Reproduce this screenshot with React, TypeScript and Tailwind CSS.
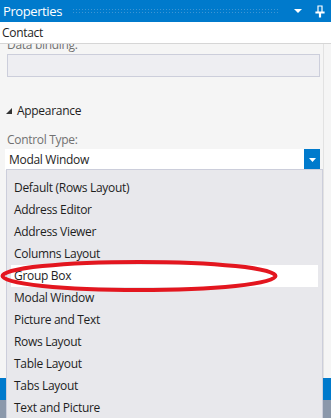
const items = [
  'Default (Rows Layout)',
  'Address Editor',
  'Address Viewer',
  'Columns Layout',
  'Group Box',
  'Modal Window',
  'Picture and Text',
  'Rows Layout',
  'Table Layout',
  'Tabs Layout',
  'Text and Picture',
]

export default function App() {
  return (
    <div
      className="relative w-[331px] h-[418px] overflow-hidden bg-[#f5f5f5] text-[12px] tracking-[-0.3px] text-[#1e1e1e]"
      style={{ fontFamily: '"Segoe UI", "Open Sans", "Noto Sans", sans-serif' }}
    >
      {/* title bar */}
      <div className="h-[22px] bg-[#007acc] flex items-center pl-[3px] pr-[6px] gap-[6px]">
        <span className="text-white text-[13px] leading-none tracking-[-0.4px]">Properties</span>
        <div className="flex-1 h-[6px] ml-[4px] bg-[radial-gradient(circle,#3d95d4_0.7px,transparent_1px)] bg-[length:3px_3px]" />
        <svg width="10" height="6" viewBox="0 0 10 6" className="ml-[8px]">
          <path d="M1 1h8L5 5z" fill="#fff" />
        </svg>
        <svg width="10" height="13" viewBox="0 0 10 13" className="ml-[6px]">
          <path d="M3 1h4v6H3zM1 7h8v1H1zM4.5 8h1v4h-1z" fill="none" stroke="#fff" strokeWidth="1.2" />
        </svg>
      </div>

      <div className="h-[22px] bg-white border-b border-[#d6d6d6] flex items-center pl-[2px] text-[12px] text-[#1e1e1e]">
        Contact
      </div>

      <div className="flex">
        <div className="flex-1">
          <div className="h-[10px] overflow-hidden">
            <div className="-mt-[8px] pl-[7px] text-[12px] text-[#717171]">Data binding:</div>
          </div>
          <div className="ml-[7px] mr-[1px] h-[23px] bg-[#eeeef2] border border-[#cccedb]" />
          <div className="h-[24px]" />
          <div className="h-[20px] flex items-center pl-[6px] gap-[5px] text-[12px]">
            <svg width="6" height="6" viewBox="0 0 6 6">
              <path d="M6 0v6H0z" fill="#333" />
            </svg>
            <span>Appearance</span>
          </div>
          <div className="h-[10px]" />
          <div className="h-[18px] pl-[7px] text-[12px] text-[#717171] leading-[18px]">Control Type:</div>
          <div className="ml-[5px] mr-[1px] h-[21px] bg-white flex items-center">
            <span className="flex-1 pl-[4px] text-[12px]">Modal Window</span>
            <div className="w-[16px] h-[21px] bg-[#007acc] flex items-center justify-center">
              <svg width="7" height="4" viewBox="0 0 7 4">
                <path d="M0 0h7L3.5 4z" fill="#fff" />
              </svg>
            </div>
          </div>
          <div className="h-[208px]" />
        </div>
        <div className="w-[8px] border-l border-[#e2e2e2] bg-[#f5f5f5] ml-[2px]" />
      </div>

      <div className="h-[22px] bg-[#007acc]" />
      <div className="h-[30px] bg-[#8b98ab]" />

      {/* dropdown list */}
      <div className="absolute left-[6px] top-[169px] w-[317px] h-[260px] bg-[#e8e8ec] border border-[#cccedb] pt-[7px]">
        {items.map((item) => (
          <div
            key={item}
            className={
              item === 'Group Box'
                ? 'h-[22px] mx-[4px] bg-white flex items-center pl-[3px] text-[12px]'
                : 'h-[22px] flex items-center pl-[7px] text-[12px]'
            }
          >
            {item}
          </div>
        ))}
      </div>

      {/* red annotation */}
      <svg className="absolute left-0 top-[259px]" width="282" height="34" viewBox="0 0 282 34">
        <ellipse cx="139" cy="17" rx="136.5" ry="14" fill="none" stroke="#e3161f" strokeWidth="4" />
      </svg>
    </div>
  )
}
